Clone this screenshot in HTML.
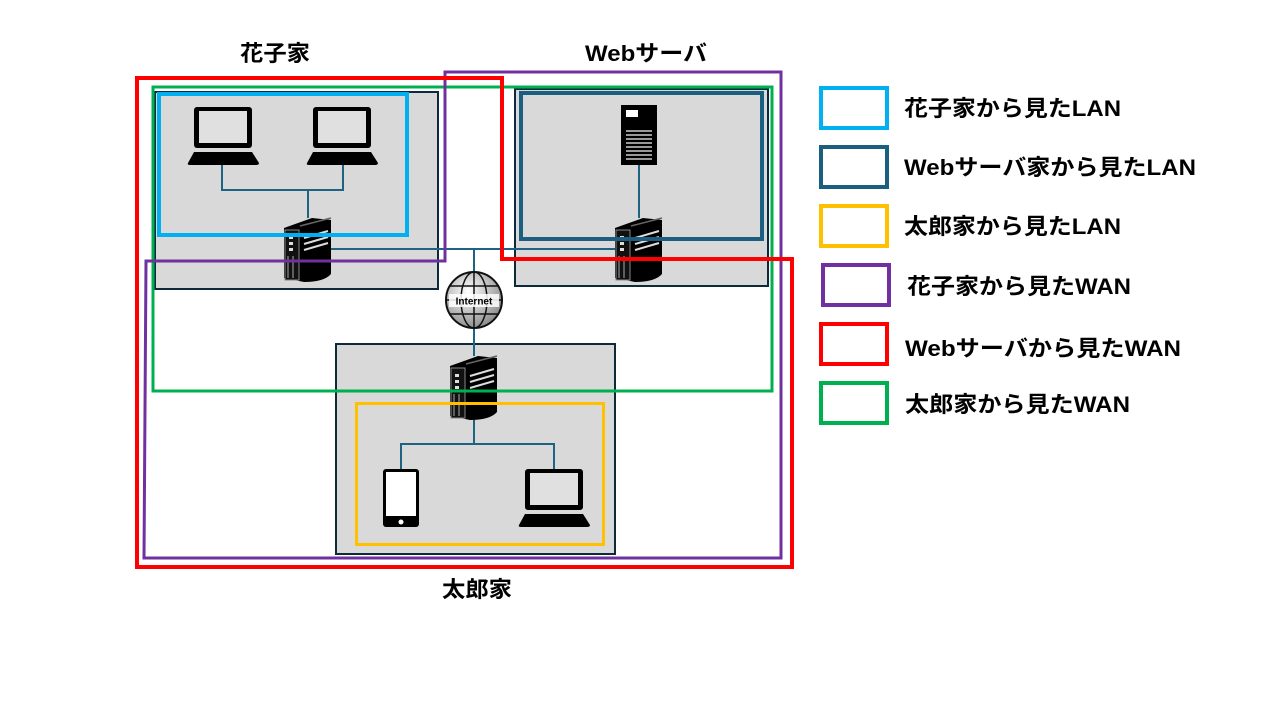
<!DOCTYPE html>
<html><head><meta charset="utf-8"><style>
html,body{margin:0;padding:0;background:#fff;width:1280px;height:720px;overflow:hidden}
text{font-family:"Liberation Sans","Noto Sans CJK JP",sans-serif;font-weight:bold;fill:#000}
</style></head><body>
<svg width="1280" height="720" viewBox="0 0 1280 720" xmlns="http://www.w3.org/2000/svg">
<defs>
<g id="laptop">
<rect x="6" y="0" width="58" height="41" rx="3" fill="#000"/>
<rect x="11" y="4" width="48" height="32" fill="#e0e0e0"/>
<path d="M6 45 H64 L71 56 Q71 58 68 58 H2 Q-1 58 0 56 Z" fill="#000"/>
</g>
<g id="router">
<path d="M0 12 L28 2 L47 4 V58 Q40 66 20 66 L0 62 Z" fill="#000"/>
<path d="M16 10 L47 2" stroke="#666" stroke-width="1.5"/>
<rect x="1" y="14" width="14" height="50" fill="#111" stroke="#888" stroke-width="1"/>
<rect x="5" y="20" width="4" height="3" fill="#ddd"/><rect x="5" y="26" width="4" height="3" fill="#ddd"/><rect x="5" y="32" width="4" height="3" fill="#ddd"/>
<line x1="4" y1="40" x2="4" y2="62" stroke="#aaa"/><line x1="9" y1="40" x2="9" y2="62" stroke="#aaa"/>
<path d="M20 22 L44 15 M20 28 L44 21 M20 34 L44 27" stroke="#ddd" stroke-width="2"/>
</g>
</defs>
<rect x="155" y="92" width="283" height="197" fill="#d9d9d9" stroke="#0d2a3a" stroke-width="2"/>
<rect x="515" y="89" width="253" height="197" fill="#d9d9d9" stroke="#0d2a3a" stroke-width="2"/>
<rect x="336" y="344" width="279" height="210" fill="#d9d9d9" stroke="#0d2a3a" stroke-width="2"/>
<g stroke="#1f6383" stroke-width="2" fill="none">
<path d="M222 165 V190 H343 V165 M308 190 V218"/>
<path d="M330 249 H617 M474 249 V274 M474 326 V356 M474 418 V444 M401 469 V444 H554 V469"/>
<path d="M639 164 V218"/>
</g>
<use href="#laptop" x="188" y="107"/>
<use href="#laptop" x="307" y="107"/>
<use href="#laptop" x="519" y="469"/>
<use href="#router" x="284" y="216"/>
<use href="#router" x="615" y="216"/>
<use href="#router" x="450" y="354"/>
<rect x="621" y="105" width="36" height="60" fill="#000"/>
<rect x="626" y="110" width="12" height="7" fill="#fff"/>
<g stroke="#ccc" stroke-width="1.5"><line x1="626" y1="131" x2="652" y2="131"/><line x1="626" y1="135" x2="652" y2="135"/><line x1="626" y1="139" x2="652" y2="139"/><line x1="626" y1="143" x2="652" y2="143"/><line x1="626" y1="147" x2="652" y2="147"/><line x1="626" y1="151" x2="652" y2="151"/><line x1="626" y1="155" x2="652" y2="155"/><line x1="626" y1="159" x2="652" y2="159"/></g>
<rect x="383" y="469" width="36" height="58" rx="3" fill="#000"/>
<rect x="386" y="472" width="30" height="44" fill="#fff"/>
<circle cx="401" cy="522" r="2.5" fill="#fff"/>
<defs><radialGradient id="gg" cx="0.4" cy="0.35" r="0.7"><stop offset="0" stop-color="#fff"/><stop offset="1" stop-color="#888"/></radialGradient></defs>
<circle cx="474" cy="300" r="28" fill="url(#gg)" stroke="#111" stroke-width="2"/>
<g stroke="#111" stroke-width="1.5" fill="none">
<ellipse cx="474" cy="300" rx="13" ry="28"/><line x1="474" y1="272" x2="474" y2="328"/>
<path d="M450 286 H498 M450 314 H498 M446 300 H502"/>
</g>
<rect x="449" y="294" width="50" height="13" fill="#fff" opacity="0.85"/>
<text x="474" y="304.5" font-size="10" text-anchor="middle">Internet</text>
<rect x="159" y="94" width="248" height="141" fill="none" stroke="#00b0f0" stroke-width="4"/>
<rect x="521" y="93" width="241" height="146" fill="none" stroke="#1a5f80" stroke-width="4"/>
<rect x="356.5" y="403.5" width="247" height="141" fill="none" stroke="#ffc000" stroke-width="3"/>
<rect x="153" y="87" width="619" height="304" fill="none" stroke="#00b050" stroke-width="3"/>
<path d="M445 72 H781 V558 H144 L146 261 H445 Z" fill="none" stroke="#7030a0" stroke-width="3"/>
<path d="M137 78 H502 V259 H792 V567 H137 Z" fill="none" stroke="#ff0000" stroke-width="4"/>
<text x="275" y="61" font-size="22" text-anchor="middle" textLength="70" lengthAdjust="spacingAndGlyphs">花子家</text>
<text x="646" y="61" font-size="22" text-anchor="middle" textLength="122" lengthAdjust="spacingAndGlyphs">Webサーバ</text>
<text x="477" y="597" font-size="22" text-anchor="middle" textLength="70" lengthAdjust="spacingAndGlyphs">太郎家</text>
<g fill="none" stroke-width="4">
<rect x="821" y="88" width="66" height="40" stroke="#00b0f0"/>
<rect x="821" y="147" width="66" height="40" stroke="#1a5f80"/>
<rect x="821" y="206" width="66" height="40" stroke="#ffc000"/>
<rect x="823" y="265" width="66" height="40" stroke="#7030a0"/>
<rect x="821" y="324" width="66" height="40" stroke="#ff0000"/>
<rect x="821" y="383" width="66" height="40" stroke="#00b050"/>
</g>
<g font-size="22">
<text x="904" y="116" textLength="217" lengthAdjust="spacingAndGlyphs">花子家から見たLAN</text>
<text x="904" y="175" textLength="292" lengthAdjust="spacingAndGlyphs">Webサーバ家から見たLAN</text>
<text x="904" y="234" textLength="217" lengthAdjust="spacingAndGlyphs">太郎家から見たLAN</text>
<text x="907" y="294" textLength="224" lengthAdjust="spacingAndGlyphs">花子家から見たWAN</text>
<text x="905" y="356" textLength="276" lengthAdjust="spacingAndGlyphs">Webサーバから見たWAN</text>
<text x="905" y="412" textLength="225" lengthAdjust="spacingAndGlyphs">太郎家から見たWAN</text>
</g>
</svg>
</body></html>
